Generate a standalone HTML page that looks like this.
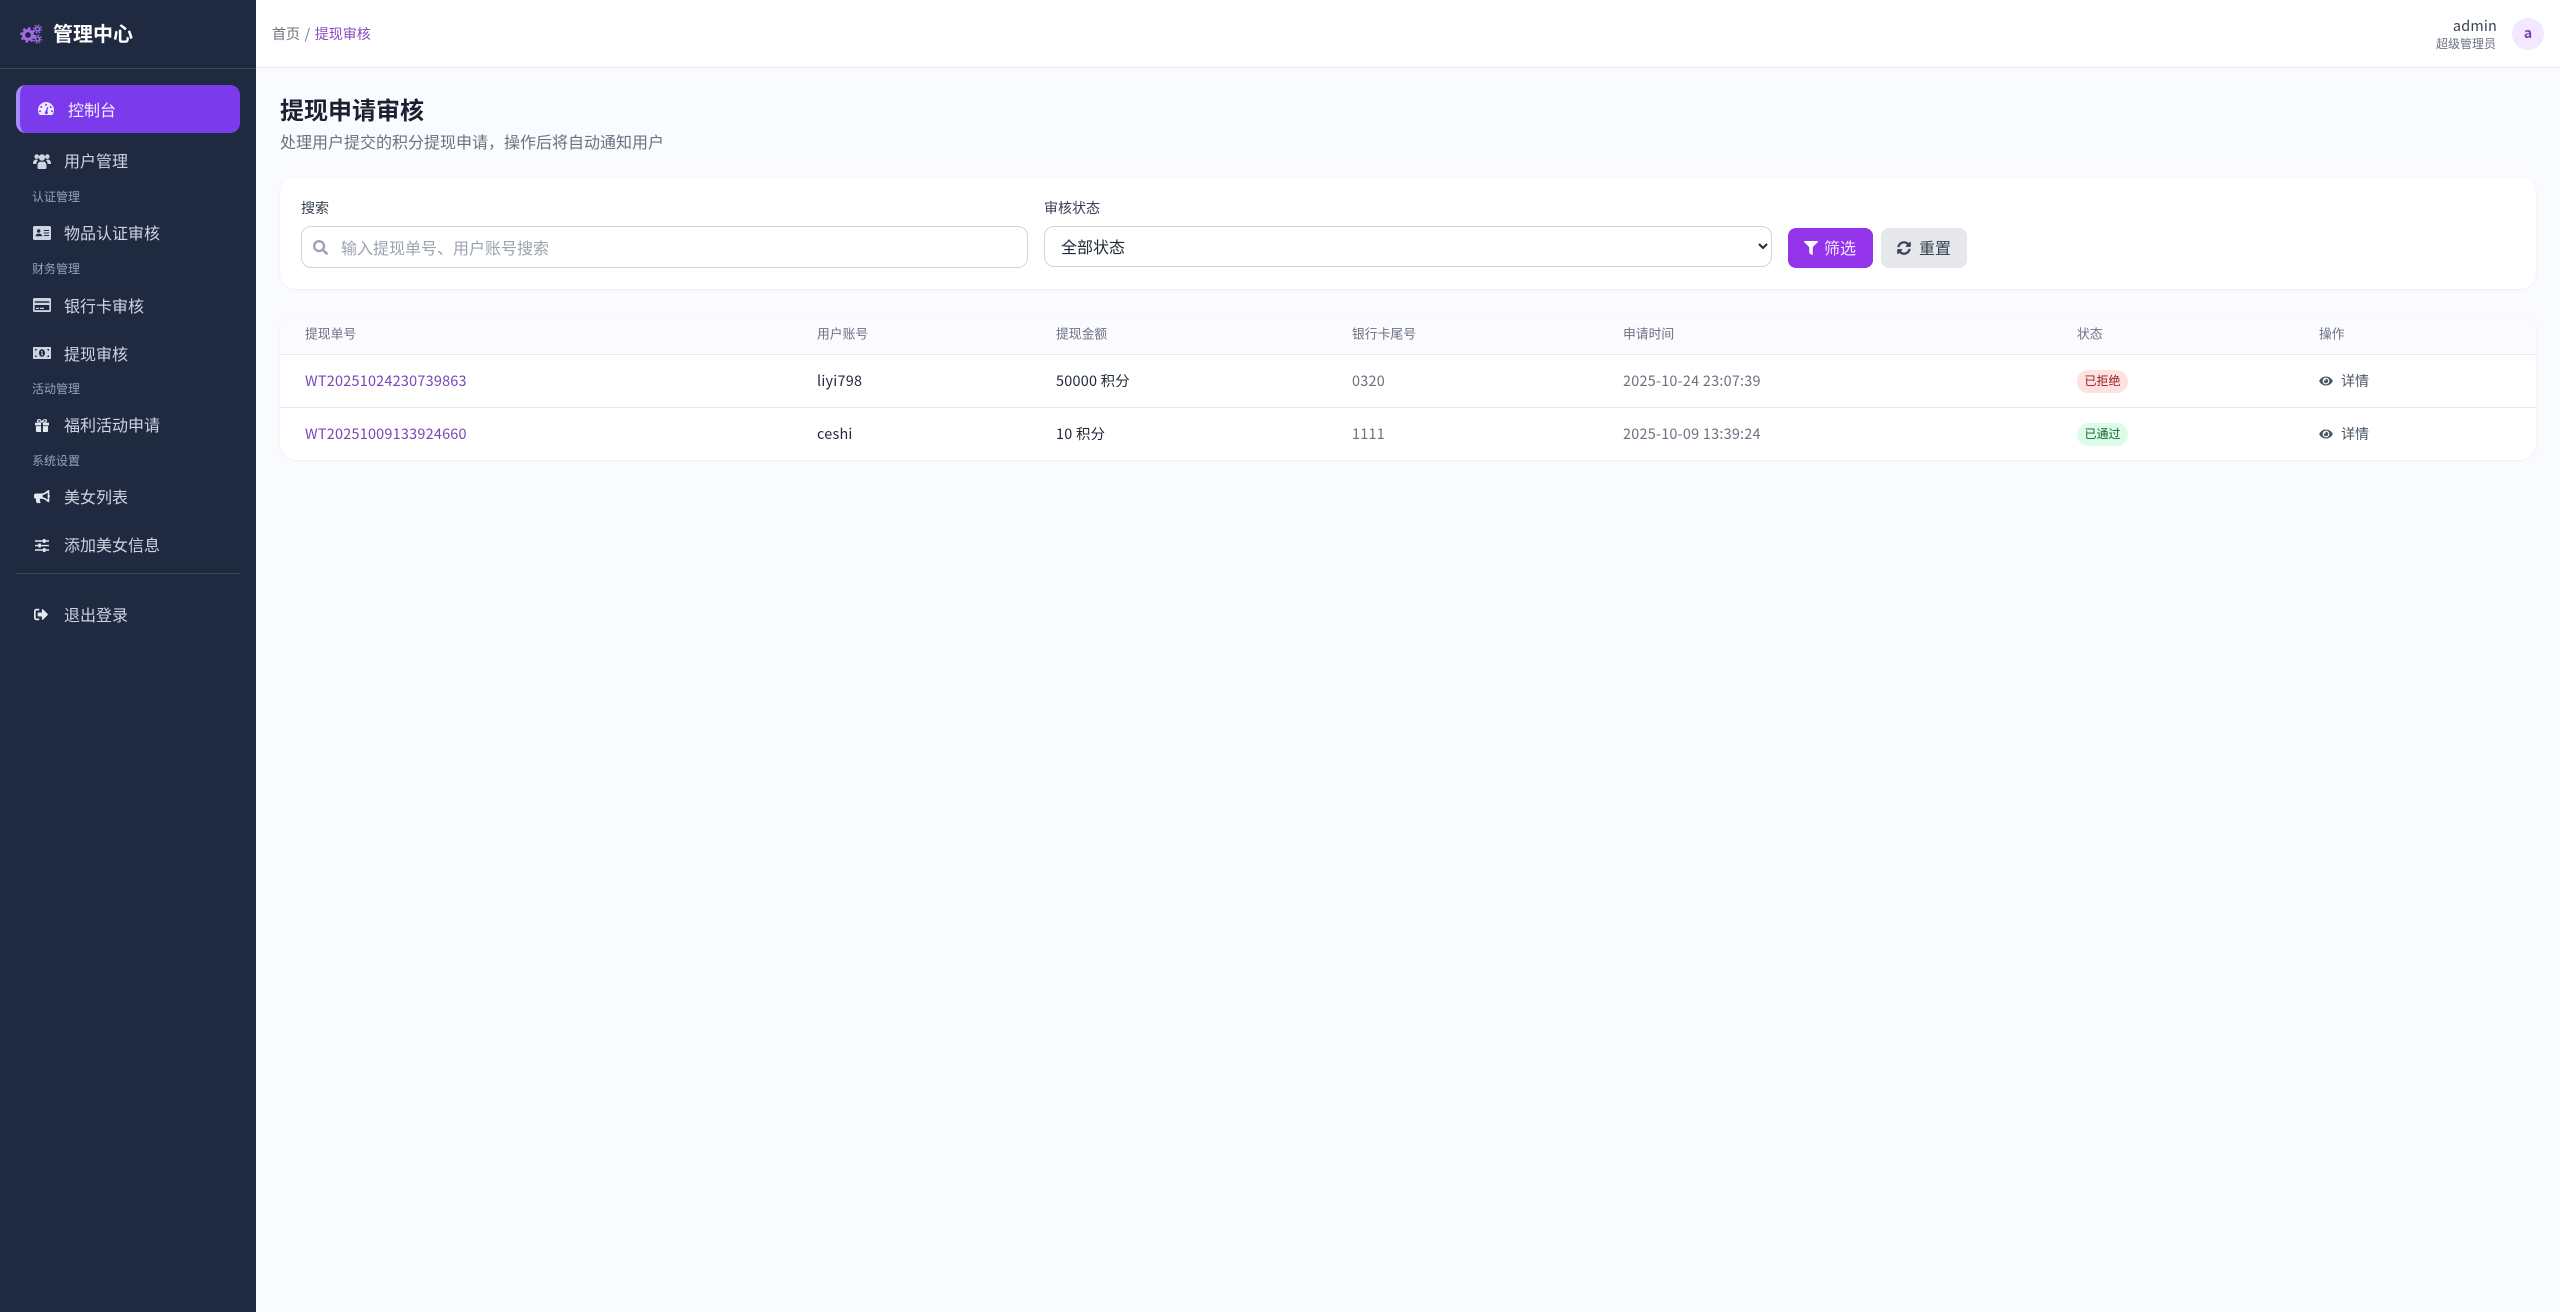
<!DOCTYPE html>
<html lang="zh-CN"><head><meta charset="utf-8"><title>提现申请审核</title>
<style>
*{box-sizing:border-box;margin:0;padding:0}
html,body{width:2560px;height:1312px;overflow:hidden;background:#fafbfe;font-family:"Noto Sans CJK SC","Liberation Sans",sans-serif;color:#1f2937}
.a{position:absolute;white-space:nowrap;line-height:1}
.c{transform:translateY(-50%)}
#side{position:absolute;left:0;top:0;width:256px;height:1312px;background:#1f2a40}
.nav{color:#cbd5e1;font-size:16px;left:64px}
.lab{color:#94a3b8;font-size:12px;left:32px}
svg{position:absolute;display:block}
.card{position:absolute;background:#fff;border-radius:16px;box-shadow:0 1px 3px rgba(0,0,0,.05)}
.th{font-size:12.8px;color:#6b7280}
.td{font-size:14.4px;letter-spacing:.25px}
.gray{color:#6b7280}
.lnk{color:#7a45b5}
.badge{position:absolute;left:2077px;width:51px;height:23px;border-radius:12px;font-size:12px;line-height:22px;text-align:center}
</style></head><body>
<div id="side"></div>
<div class="a" style="left:0;top:68px;width:256px;height:1px;background:#3a4558"></div>

<svg style="left:20px;top:24px" width="22" height="20" viewBox="0 0 22 20" fill="none">
<circle cx="8" cy="11" r="4.400" stroke="#a26be8" stroke-width="3"/><circle cx="8" cy="11" r="6.800" stroke="#a26be8" stroke-width="2" stroke-dasharray="2.600 2.700"/>
<circle cx="17.500" cy="5" r="2" stroke="#a26be8" stroke-width="1.600"/><circle cx="17.500" cy="5" r="3.800" stroke="#a26be8" stroke-width="1.400" stroke-dasharray="1.600 1.400"/>
<circle cx="17.500" cy="15" r="2" stroke="#a26be8" stroke-width="1.600"/><circle cx="17.500" cy="15" r="3.800" stroke="#a26be8" stroke-width="1.400" stroke-dasharray="1.600 1.400"/></svg>
<div class="a c" style="left:53px;top:33px;font-size:20px;font-weight:700;color:#fff">管理中心</div>

<div class="a" style="left:16px;top:85px;width:224px;height:48px;background:#7c3aed;border-left:4px solid #a78bfa;border-radius:10px"></div>
<svg style="left:38px;top:102px" width="16" height="14" viewBox="0 0 16 14"><path fill="#ede9fe" fill-rule="evenodd" d="M8 0a8 8 0 0 0-8 8c0 1.600.5 3.100 1.200 4.400.3.500.8.600 1.300.600h11c.5 0 1-.1 1.300-.6C15.500 11.100 16 9.600 16 8a8 8 0 0 0-8-8zM8 1.800a1 1 0 1 1 0 2 1 1 0 0 1 0-2zM3.300 4a1 1 0 1 1 0 2 1 1 0 0 1 0-2zm9.400 0a1 1 0 1 1 0 2 1 1 0 0 1 0-2zM2 8.200a1 1 0 1 1 0 2 1 1 0 0 1 0-2zm12 0a1 1 0 1 1 0 2 1 1 0 0 1 0-2zM9.400 4.800l.9.300-1 4.300a1.600 1.600 0 1 1-1.700-.2z"/></svg>
<div class="a c" style="left:68px;top:109px;font-size:16px;color:#f3f0ff">控制台</div>

<svg style="left:33px;top:153px" width="18" height="17" viewBox="0 0 18 17" fill="#cbd5e1"><circle cx="3.700" cy="3.600" r="2.300"/><circle cx="14.300" cy="3.600" r="2.300"/><circle cx="9" cy="4.500" r="3.200"/><path d="M0 10.500C0 8 1.300 6.500 3.200 6.500c.8 0 1.400.3 1.800.7-1 1-1.600 2.300-1.700 3.800H.5a.5.5 0 0 1-.5-.5zM18 10.500C18 8 16.700 6.500 14.800 6.500c-.8 0-1.400.3-1.800.7 1 1 1.600 2.300 1.700 3.800h2.800a.5.5 0 0 0 .5-.5zM4.500 12.500c0-2.400 1.700-4 3-4 .5.300 1 .4 1.500.4s1-.1 1.500-.4c1.300 0 3 1.600 3 4v2.300c0 .7-.5 1.200-1.200 1.200H5.700c-.7 0-1.200-.5-1.200-1.200z"/></svg>
<div class="a c nav" style="top:160px">用户管理</div>
<div class="a c lab" style="top:197px">认证管理</div>

<svg style="left:33px;top:226px" width="18" height="14" viewBox="0 0 18 14"><path fill="#cbd5e1" fill-rule="evenodd" d="M1.500 0h15A1.500 1.500 0 0 1 18 1.500v11a1.500 1.500 0 0 1-1.500 1.500h-15A1.500 1.500 0 0 1 0 12.500v-11A1.500 1.500 0 0 1 1.500 0zM5.700 3.300a1.700 1.700 0 1 0 0 3.400 1.700 1.700 0 0 0 0-3.400zM2.700 10.200h6c.2 0 .3-.1.300-.3 0-1.200-1-2.200-2.300-2.200H5C3.700 7.700 2.700 8.700 2.700 9.900c0 .2 0 .3.300.3zM10.800 4v1H16V4zM10.800 6.500v1H16v-1zM10.800 9v1H16V9z"/></svg>
<div class="a c nav" style="top:232px">物品认证审核</div>
<div class="a c lab" style="top:269px">财务管理</div>

<svg style="left:33px;top:298px" width="18" height="14" viewBox="0 0 18 14"><path fill="#cbd5e1" fill-rule="evenodd" d="M1.500 0h15A1.500 1.500 0 0 1 18 1.500v11a1.500 1.500 0 0 1-1.500 1.500h-15A1.500 1.500 0 0 1 0 12.500v-11A1.500 1.500 0 0 1 1.500 0zM1.700 3.200v1.500h14.600V3.200zM1.700 7v5.100h14.600V7zM3 9.800h3V11H3zM7 9.800h4V11H7z"/></svg>
<div class="a c nav" style="top:305px">银行卡审核</div>

<svg style="left:33px;top:347px" width="18" height="12" viewBox="0 0 18 12"><path fill="#cbd5e1" fill-rule="evenodd" d="M.5 0h17c.3 0 .5.200.5.500v11c0 .3-.2.500-.5.500H.5a.5.500 0 0 1-.5-.5V.5C0 .2.200 0 .5 0zM9 2.200C7.300 2.200 6 3.900 6 6s1.300 3.800 3 3.800 3-1.700 3-3.800-1.300-3.800-3-3.800zM2 2v1.800C3 3.800 3.800 3 3.800 2zm12.200 0c0 1 .8 1.800 1.800 1.800V2zM2 8.200V10h1.800C3.800 9 3 8.200 2 8.200zM16 8.200c-1 0-1.800.8-1.800 1.800H16zM8.300 4h1.200v3.500h.6v.8H8v-.8h.6V5.100h-.5z"/></svg>
<div class="a c nav" style="top:353px">提现审核</div>
<div class="a c lab" style="top:389px">活动管理</div>

<svg style="left:35px;top:419px" width="14" height="13" viewBox="0 0 15 15" preserveAspectRatio="none"><path fill="#e2e8f0" d="M0 4.300h6.500v3H0zM8.500 4.300H15v3H8.500zM1 8.200h5.500V15H2a1 1 0 0 1-1-1zM8.500 8.200H14V14a1 1 0 0 1-1 1H8.500zM4.400 0C5.800 0 6.800 1.300 7.500 2.600 8.200 1.300 9.200 0 10.600 0c1.300 0 2.300.9 2.300 2.100 0 .9-.4 1.600-1 2H3c-.6-.4-1-1.100-1-2C2 .9 3.100 0 4.400 0zm0 1.300c-.5 0-.9.300-.9.800 0 .6.500 1 1 1h1.800c-.5-1-1.100-1.800-1.900-1.800zm6.200 0c-.8 0-1.400.8-1.900 1.800h1.800c.5 0 1-.4 1-1 0-.5-.4-.8-.9-.8z"/></svg>
<div class="a c nav" style="top:424px">福利活动申请</div>
<div class="a c lab" style="top:461px">系统设置</div>

<svg style="left:34px;top:490px" width="16" height="14" viewBox="0 0 18 16" preserveAspectRatio="none"><path fill="#e2e8f0" fill-rule="evenodd" d="M16.300 0c.5 0 .9.400.9 1v4.700c.5.200.8.700.8 1.300s-.3 1.100-.8 1.300V13c0 .6-.4 1-.9 1-.2 0-.4-.1-.6-.2l-2.500-2C11.700 10.600 9.900 10 8 10H6.800c-.1.500-.2.900-.2 1.300 0 .9.300 1.700.7 2.400.3.600-.1 1.300-.8 1.300H3.900c-.4 0-.7-.2-.9-.5-.5-1-.8-2.100-.8-3.200 0-.4.100-.8.100-1.300H2c-1.100 0-2-.9-2-2V6c0-1.100.9-2 2-2h6c1.900 0 3.700-.6 5.200-1.800l2.500-2c.2-.1.400-.2.600-.2zm-.9 2.800-1.100.9c-1.300 1-2.800 1.700-4.500 2v2.600c1.700.3 3.200 1 4.500 2l1.100.9z"/></svg>
<div class="a c nav" style="top:496px">美女列表</div>

<svg style="left:35px;top:539px" width="14" height="13" viewBox="0 0 15 14" preserveAspectRatio="none" fill="#e2e8f0"><path d="M0 1.400h15v1.500H0zM0 6.300h15v1.500H0zM0 11.100h15v1.500H0z"/><rect x="8.500" y="0" width="2.800" height="4.200" rx=".5"/><rect x="3.500" y="4.900" width="2.800" height="4.200" rx=".5"/><rect x="8.500" y="9.800" width="2.800" height="4.200" rx=".5"/></svg>
<div class="a c nav" style="top:544px">添加美女信息</div>

<div class="a" style="left:16px;top:573px;width:224px;height:1px;background:#3a4558"></div>

<svg style="left:34px;top:608px" width="14" height="13" viewBox="0 0 14 13"><path fill="#e2e8f0" d="M13.800 6.100 9 1.300c-.4-.4-1.100-.1-1.100.4v2.800H4.300c-.4 0-.7.300-.7.700v2.600c0 .4.300.7.700.7h3.600v2.800c0 .5.700.8 1.100.4l4.800-4.800c.2-.2.200-.6 0-.8zM5 .8H2.500C1.100.8 0 1.900 0 3.300v6.400c0 1.400 1.100 2.500 2.500 2.500H5c.2 0 .3-.1.300-.3v-1.100c0-.2-.1-.3-.3-.3H2.500c-.5 0-.8-.4-.8-.8V3.300c0-.5.300-.8.800-.8H5c.2 0 .3-.1.300-.3V1.100C5.300.9 5.200.8 5 .8z"/></svg>
<div class="a c nav" style="top:614px">退出登录</div>

<div class="a" style="left:256px;top:0;width:2304px;height:68px;background:#fff;border-bottom:1px solid #ebecf0"></div>
<div class="a c" style="left:272px;top:34px;font-size:14px;color:#6b7280">首页 <span style="margin:0 1.500px">/</span> <span style="color:#8b4ac4">提现审核</span></div>
<div class="a c" style="right:63px;top:26px;font-size:14.400px;color:#374151;letter-spacing:.2px">admin</div>
<div class="a c" style="right:64px;top:44px;font-size:12px;color:#6b7280">超级管理员</div>
<div class="a" style="left:2512px;top:18px;width:32px;height:32px;border-radius:50%;background:#f3e8ff;color:#7e3fb8;font-size:14px;font-weight:700;line-height:31px;text-align:center">a</div>

<div class="a c" style="left:280px;top:109px;font-size:24px;font-weight:700;color:#1a2130">提现申请审核</div>
<div class="a c" style="left:280px;top:141px;font-size:16px;color:#6b7280">处理用户提交的积分提现申请，操作后将自动通知用户</div>

<div class="card" style="left:280px;top:177px;width:2256px;height:112px"></div>
<div class="a c" style="left:301px;top:208px;font-size:14px;color:#374151">搜索</div>
<div class="a" style="left:301px;top:226px;width:727px;height:42px;border:1px solid #d1d5db;border-radius:10px;background:#fff"></div>
<svg style="left:313px;top:240px" width="15" height="15" viewBox="0 0 512 512"><path fill="#9ca3af" d="M505 442.700L405.300 343c-4.500-4.500-10.600-7-17-7H372c27.600-35.300 44-79.700 44-128C416 93.100 322.900 0 208 0S0 93.100 0 208s93.100 208 208 208c48.300 0 92.700-16.400 128-44v16.300c0 6.400 2.500 12.500 7 17l99.700 99.700c9.400 9.400 24.600 9.400 33.900 0l28.300-28.300c9.400-9.400 9.400-24.600.1-34zM208 336c-70.700 0-128-57.200-128-128 0-70.700 57.200-128 128-128 70.700 0 128 57.200 128 128 0 70.700-57.200 128-128 128z"/></svg>
<div class="a c" style="left:341px;top:247px;font-size:16px;color:#9ca3af">输入提现单号、用户账号搜索</div>

<div class="a c" style="left:1044px;top:208px;font-size:14px;color:#374151">审核状态</div>
<select class="a" style="left:1044px;top:226px;width:728px;height:41px;border:1px solid #d1d5db;border-radius:10px;background:#fff;font-family:inherit;font-size:16px;color:#1f2937;padding:0 0 2px 12px"><option>全部状态</option></select>

<div class="a" style="left:1788px;top:228px;width:85px;height:40px;background:#9333ea;border-radius:8px"></div>
<svg style="left:1804px;top:241px" width="14" height="14" viewBox="0 0 512 512"><path fill="#fff" d="M487.976 0H24.028C2.710 0-8.047 25.866 7.058 40.971L192 225.941V432c0 7.831 3.821 15.170 10.237 19.662l80 55.980C298.020 518.690 320 507.493 320 487.980V225.941l184.947-184.970C520.021 25.896 509.338 0 487.976 0z"/></svg>
<div class="a c" style="left:1824px;top:247px;font-size:16px;color:#f3e8ff">筛选</div>
<div class="a" style="left:1881px;top:228px;width:86px;height:40px;background:#e5e7eb;border-radius:8px"></div>
<svg style="left:1897px;top:241px" width="14" height="14" viewBox="0 0 512 512"><path fill="#374151" d="M370.720 133.280C339.458 104.008 298.888 87.962 255.848 88c-77.458.068-144.328 53.178-162.791 126.850-1.344 5.363-6.122 9.150-11.651 9.150H24.103c-7.498 0-13.194-6.807-11.807-14.176C33.933 94.924 134.813 8 256 8c66.448 0 126.791 26.136 171.315 68.685L463.030 40.970C478.149 25.851 504 36.559 504 57.941V192c0 13.255-10.745 24-24 24H345.941c-21.382 0-32.090-25.851-16.971-40.971l41.750-41.749zM32 296h134.059c21.382 0 32.090 25.851 16.971 40.971l-41.750 41.750c31.262 29.273 71.835 45.319 114.876 45.280 77.418-.07 144.315-53.144 162.787-126.849 1.344-5.363 6.122-9.150 11.651-9.150h57.304c7.498 0 13.194 6.807 11.807 14.176C478.067 417.076 377.187 504 256 504c-66.448 0-126.791-26.136-171.315-68.685L48.970 471.030C33.851 486.149 8 475.441 8 454.059V320c0-13.255 10.745-24 24-24z"/></svg>
<div class="a c" style="left:1919px;top:247px;font-size:16px;color:#374151">重置</div>

<div class="card" style="left:280px;top:314px;width:2256px;height:146px;overflow:hidden">
<div style="height:41px;background:#fafaff;border-bottom:1px solid #e5e7eb"></div>
<div style="position:absolute;left:0;top:93px;width:100%;height:1px;background:#e8e9ec"></div>
</div>
<div class="a c th" style="left:305px;top:334px">提现单号</div>
<div class="a c th" style="left:817px;top:334px">用户账号</div>
<div class="a c th" style="left:1056px;top:334px">提现金额</div>
<div class="a c th" style="left:1352px;top:334px">银行卡尾号</div>
<div class="a c th" style="left:1623px;top:334px">申请时间</div>
<div class="a c th" style="left:2077px;top:334px">状态</div>
<div class="a c th" style="left:2319px;top:334px">操作</div>

<div class="a c td lnk" style="left:305px;top:381px">WT20251024230739863</div>
<div class="a c td" style="left:817px;top:381px">liyi798</div>
<div class="a c td" style="left:1056px;top:381px">50000 积分</div>
<div class="a c td gray" style="left:1352px;top:381px">0320</div>
<div class="a c td gray" style="left:1623px;top:381px">2025-10-24 23:07:39</div>
<div class="badge" style="top:370px;background:#fee2e2;color:#991b1b">已拒绝</div>
<svg style="left:2319px;top:375px" width="14" height="12" viewBox="0 0 576 512"><path fill="#4b5563" d="M572.520 241.400C518.290 135.590 410.930 64 288 64S57.680 135.640 3.480 241.410a32.350 32.350 0 0 0 0 29.190C57.710 376.410 165.070 448 288 448s230.320-71.640 284.520-177.410a32.350 32.350 0 0 0 0-29.190zM288 400a144 144 0 1 1 144-144 143.930 143.930 0 0 1-144 144zm0-240a95.310 95.310 0 0 0-25.310 3.790 47.850 47.850 0 0 1-66.900 66.900A95.780 95.780 0 1 0 288 160z"/></svg>
<div class="a c" style="left:2341px;top:381px;font-size:14px;color:#4b5563">详情</div>

<div class="a c td lnk" style="left:305px;top:434px">WT20251009133924660</div>
<div class="a c td" style="left:817px;top:434px">ceshi</div>
<div class="a c td" style="left:1056px;top:434px">10 积分</div>
<div class="a c td gray" style="left:1352px;top:434px">1111</div>
<div class="a c td gray" style="left:1623px;top:434px">2025-10-09 13:39:24</div>
<div class="badge" style="top:423px;background:#dcfce7;color:#166534">已通过</div>
<svg style="left:2319px;top:428px" width="14" height="12" viewBox="0 0 576 512"><path fill="#4b5563" d="M572.520 241.400C518.290 135.590 410.930 64 288 64S57.680 135.640 3.480 241.410a32.350 32.350 0 0 0 0 29.190C57.710 376.410 165.070 448 288 448s230.320-71.640 284.520-177.410a32.350 32.350 0 0 0 0-29.190zM288 400a144 144 0 1 1 144-144 143.930 143.930 0 0 1-144 144zm0-240a95.310 95.310 0 0 0-25.310 3.790 47.850 47.850 0 0 1-66.900 66.900A95.780 95.780 0 1 0 288 160z"/></svg>
<div class="a c" style="left:2341px;top:434px;font-size:14px;color:#4b5563">详情</div>
</body></html>
